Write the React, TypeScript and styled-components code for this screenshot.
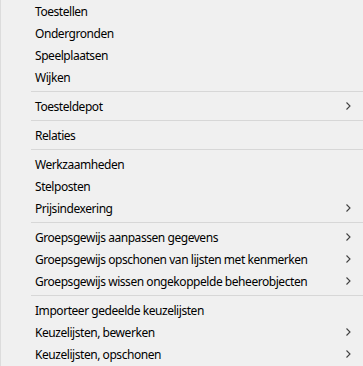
import React from "react";
import styled, { createGlobalStyle } from "styled-components";

const Global = createGlobalStyle`
  html, body { margin: 0; padding: 0; background: #f0f0f0; }
  body { font-family: "Noto Sans", "Segoe UI", sans-serif; }
`;

const Menu = styled.div`
  width: 363px;
  height: 366px;
  box-sizing: border-box;
  background: #f0f0f0;
  border-left: 1px solid #dcdcdc;
  display: flex;
  flex-direction: column;
  overflow: hidden;
`;

const Item = styled.div`
  height: 22px;
  display: flex;
  align-items: center;
  padding-left: 34px;
  padding-right: 12px;
  font-size: 12px;
  color: #000;
  letter-spacing: -0.45px;
  white-space: nowrap;
`;

const Label = styled.span`
  flex: 1;
`;

const Separator = styled.div`
  height: 7px;
  display: flex;
  align-items: center;
  padding-left: 30px;
  &::after {
    content: "";
    flex: 1;
    height: 1px;
    background: #d7d7d7;
  }
`;

const Chevron = () => (
  <svg width="5" height="8" viewBox="0 0 5 8" style={{ display: "block" }}>
    <path d="M0.5 0.5 L4 4 L0.5 7.5" fill="none" stroke="#404040" strokeWidth="1.1" />
  </svg>
);

type Entry = { label?: string; sub?: boolean; sep?: boolean };

const entries: Entry[] = [
  { label: "Toestellen" },
  { label: "Ondergronden" },
  { label: "Speelplaatsen" },
  { label: "Wijken" },
  { sep: true },
  { label: "Toesteldepot", sub: true },
  { sep: true },
  { label: "Relaties" },
  { sep: true },
  { label: "Werkzaamheden" },
  { label: "Stelposten" },
  { label: "Prijsindexering", sub: true },
  { sep: true },
  { label: "Groepsgewijs aanpassen gegevens", sub: true },
  { label: "Groepsgewijs opschonen van lijsten met kenmerken", sub: true },
  { label: "Groepsgewijs wissen ongekoppelde beheerobjecten", sub: true },
  { sep: true },
  { label: "Importeer gedeelde keuzelijsten" },
  { label: "Keuzelijsten, bewerken", sub: true },
  { label: "Keuzelijsten, opschonen", sub: true },
];

export default function App() {
  return (
    <>
      <Global />
      <Menu>
        {entries.map((e, i) =>
          e.sep ? (
            <Separator key={i} />
          ) : (
            <Item key={i}>
              <Label>{e.label}</Label>
              {e.sub && <Chevron />}
            </Item>
          )
        )}
      </Menu>
    </>
  );
}
